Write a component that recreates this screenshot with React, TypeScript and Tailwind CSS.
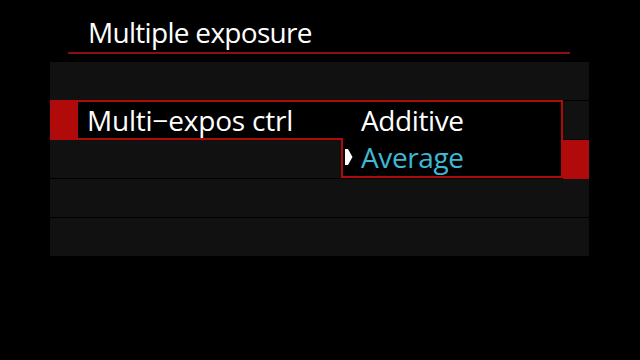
import React from "react";

const rows = [0, 1, 2, 3, 4];

export default function App() {
  return (
    <div
      className="relative w-[640px] h-[360px] overflow-hidden bg-black text-white"
      style={{ fontFamily: '"Open Sans", "Noto Sans", sans-serif' }}
    >
      {/* Title */}
      <div className="pt-[15px] pl-[88px] h-[52px] text-[28px] leading-[34px] tracking-[-0.7px]">
        Multiple exposure
      </div>
      <div className="ml-[68px] w-[502px] h-[2px] bg-[#8a0f15]" />

      {/* Menu panel */}
      <div className="relative ml-[50px] mt-[8px] w-[539px] flex flex-col gap-[1px]">
        {rows.map((i) => (
          <div key={i} className="h-[38px] bg-[#111111] flex">
            {i === 2 && <div className="ml-auto w-[26px] h-[39px] bg-[#b00a0a]" />}
          </div>
        ))}

        {/* Selected item */}
        <div className="absolute left-0 top-[38px] w-[513px] h-[40px] flex">
          <div className="w-[28px] h-full bg-[#b00a0a]" />
          <div className="flex-1 h-full bg-black border-t-2 border-b-2 border-r-2 border-[#b00a0a] flex items-center">
            <span className="pl-[9px] text-[28px] leading-none tracking-[-0.2px]">Multi−expos ctrl</span>
            <span className="absolute left-[311px] text-[28px] leading-none tracking-[-0.4px]">Additive</span>
          </div>
        </div>

        {/* Dropdown lower part */}
        <div className="absolute left-[291px] top-[76px] w-[222px] h-[40px] bg-black border-l-2 border-r-2 border-b-2 border-[#b00a0a] flex items-center">
          <svg width="8" height="16" viewBox="0 0 8 16" className="ml-[2px]">
            <polygon points="0,0 3,0 7.5,8 3,16 0,16" fill="#ffffff" />
          </svg>
          <span className="ml-[8px] text-[28px] leading-none text-[#3fb8d4] tracking-[-0.4px]">Average</span>
        </div>
      </div>
    </div>
  );
}
